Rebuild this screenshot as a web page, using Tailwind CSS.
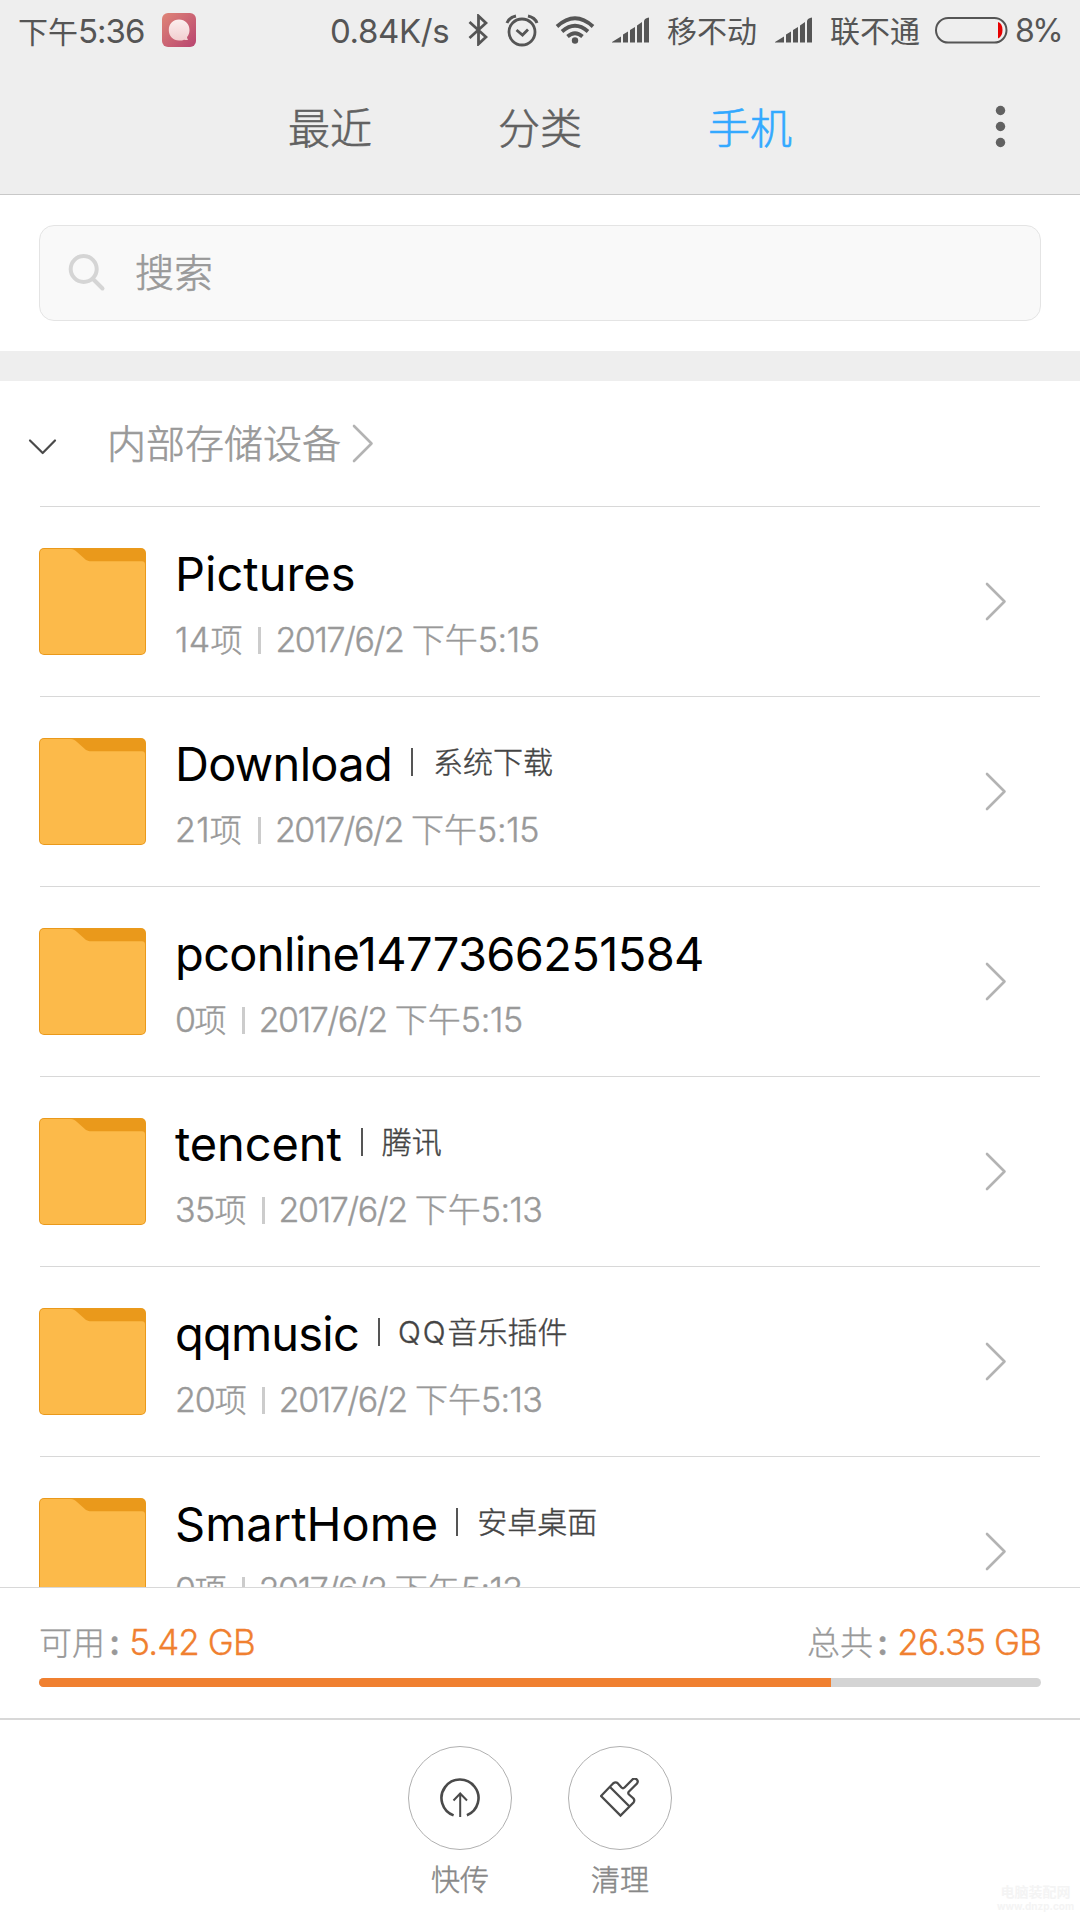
<!DOCTYPE html>
<html lang="zh-CN">
<head>
<meta charset="utf-8">
<title>文件管理</title>
<script src="https://cdn.jsdelivr.net/npm/@tailwindcss/browser@4"></script>
</head>
<body class="bg-white">
<svg class="hidden">
  <symbol id="folder" viewBox="0 0 107 107">
    <rect x="0" y="0" width="107" height="107" rx="5" fill="#ea991b"/>
    <path d="M1 5a4 4 0 0 1 4-4H32c2 0 4 1 6 3l9 8c2 1 3 1.200 5 1.200h51a3 3 0 0 1 3 3v85.800a4 4 0 0 1-4 4H5a4 4 0 0 1-4-4z" fill="#fcba4a"/>
  </symbol>
  <symbol id="next" viewBox="0 0 22 40">
    <path d="M2 2 19.500 19.500 2 37" fill="none" stroke="#b3b3b3" stroke-width="2.600" stroke-linecap="round" stroke-linejoin="round"/>
  </symbol>
  <symbol id="signal" viewBox="0 0 38 26">
    <path d="M0 25.500V25L9 19.500V25.500zM11 25.500V17.500L16 14.500V25.500zM18 25.500V13L23 10V25.500zM25 25.500V8.500L30 5V25.500zM32 25.500V4Q32.500 1 37 .500V25.500z" fill="#555"/>
  </symbol>
</svg>
<div class="relative flex h-[1920px] w-[1080px] flex-col overflow-hidden font-['Inter','Noto_Sans_CJK_SC',sans-serif]">

  <header class="h-[195px] shrink-0 border-b border-[#c8c8c8] bg-[#eee]">
    <div class="flex h-[60px] items-center pr-[19px] pl-[18px] text-[33px] leading-[60px] whitespace-nowrap text-[#555]">
      <div class="w-[144px] pt-[3px] tracking-[-1px]"><span class="text-[30px] tracking-normal">下午</span>5:36</div>
      <svg class="h-[34px] w-[34px]" viewBox="0 0 34 34">
        <defs>
          <linearGradient id="app" x1="0" y1="0" x2="1" y2="1"><stop offset="0" stop-color="#df8577"/><stop offset="1" stop-color="#b84470"/></linearGradient>
          <linearGradient id="bub" x1="0" y1="0" x2="0" y2="1"><stop offset="0" stop-color="#fbeeee"/><stop offset="1" stop-color="#f2cfd0"/></linearGradient>
        </defs>
        <rect width="34" height="34" rx="6" fill="url(#app)"/>
        <path d="M17 6.500c6 0 10.500 4.500 10.500 10.500 0 3-1 5.500-2.500 7 0 1.500 1 2.500 1 3-1.500.300-3-.200-4-.300-1.500.700-3 .800-5 .800-6 0-10.200-4.500-10.200-10.500S11 6.500 17 6.500z" fill="url(#bub)"/>
      </svg>
      <div class="ml-[134px] w-[138px] pt-px tracking-[-0.400px]">0.84K/s</div>
      <svg class="h-[32px] w-[20px]" viewBox="0 0 20 32"><path d="M1.500 8 18 23 10.500 30V2L18 9 1.500 24" fill="none" stroke="#555" stroke-width="2.800"/></svg>
      <svg class="ml-[17px] h-[34px] w-[34px]" viewBox="0 0 34 34" fill="none" stroke="#555"><circle cx="17" cy="19" r="13" stroke-width="2.800"/><path d="M11.500 17 17.500 22 23 16.500" stroke-width="2.800"/><path d="M2 10Q4 4.500 11 3M32 10Q30 4.500 23 3" stroke-width="3"/></svg>
      <svg class="ml-[16px] h-[28px] w-[40px]" viewBox="0 0 40 28"><g fill="none" stroke="#555" stroke-width="3.800"><path d="M2 10.500Q20-6 38 10.500"/><path d="M7 15.500Q20 4 33 15.500"/><path d="M12.500 20.500Q20 14 27.500 20.500"/></g><circle cx="20" cy="24.500" r="3.200" fill="#555"/></svg>
      <svg class="ml-[17px] h-[26px] w-[38px]"><use href="#signal"/></svg>
      <div class="ml-[17px] w-[90px] pt-px text-[30px]">移不动</div>
      <svg class="ml-[18px] h-[26px] w-[38px]"><use href="#signal"/></svg>
      <div class="ml-[17px] w-[90px] pt-px text-[30px]">联不通</div>
      <svg class="ml-[15px] h-[28px] w-[73px]" viewBox="0 0 73 28"><rect x="1" y="2" width="70.500" height="24.500" rx="12.200" fill="none" stroke="#555" stroke-width="2"/><path d="M63 6Q67.500 7.500 67.500 14T63 22.500z" fill="#e60000"/></svg>
      <div class="ml-auto pt-px text-[32px] tracking-[-2.600px]">8%</div>
    </div>
    <nav class="flex h-[134px] items-center pl-[225px] text-[42px] font-light text-[#616161] [-webkit-text-stroke:0.600px_currentColor]">
      <div class="w-[210px] pt-[3px] text-center">最近</div>
      <div class="w-[210px] pt-[3px] text-center">分类</div>
      <div class="w-[210px] pt-[3px] text-center text-[#33a9ff]">手机</div>
      <svg class="ml-[135px] h-[46px] w-[20px]" viewBox="0 0 20 46" fill="#616161" stroke="none"><circle cx="10.500" cy="6.500" r="4.700"/><circle cx="10.500" cy="22.500" r="4.700"/><circle cx="10.500" cy="38.500" r="4.700"/></svg>
    </nav>
  </header>

  <section class="shrink-0 px-[39px] py-[30px]">
    <div class="flex h-[96px] items-center rounded-[15px] border border-[#e4e4e4] bg-[#f9f9f9]">
      <svg class="ml-[28px] h-[40px] w-[40px]" viewBox="0 0 40 40" fill="none" stroke="#d5d5d5" stroke-width="4"><circle cx="15.700" cy="16" r="13"/><path d="M25 26 34.500 35.500" stroke-linecap="round"/></svg>
      <div class="ml-[27px] pt-px text-[39px] font-light text-[#999] [-webkit-text-stroke:0.600px_currentColor]">搜索</div>
    </div>
  </section>
  <div class="h-[30px] shrink-0 bg-[#eee]"></div>

  <section class="flex h-[125px] shrink-0 items-center pl-[27px]">
    <svg class="mt-[7px] h-[20px] w-[32px]" viewBox="0 0 32 20"><path d="M3 3.500 15.700 16 28 3.500" fill="none" stroke="#4a4a4a" stroke-width="2.200" stroke-linecap="round" stroke-linejoin="round"/></svg>
    <div class="ml-[48px] pt-[2px] text-[39px] font-light text-[#999] [-webkit-text-stroke:0.600px_currentColor]">内部存储设备</div>
    <svg class="ml-[11px] h-[40px] w-[22px]"><use href="#next"/></svg>
  </section>

  <ul class="mx-[40px] h-[1081px] shrink-0 border-t border-[#d8d8d8] [clip-path:inset(0_-10px_0_-10px)]">
    <li class="flex h-[190px] items-center border-b border-[#d8d8d8]">
      <svg class="-ml-px h-[107px] w-[107px] shrink-0"><use href="#folder"/></svg>
      <div class="ml-[29px] grow pt-[3px]">
        <div class="flex h-[60px] items-center text-[47px] leading-[60px] text-black"><span>Pictures</span></div>
        <div class="mt-[14px] flex h-[44px] items-center text-[34px] leading-[44px] font-light tracking-[-1.400px] text-[#999] [-webkit-text-stroke:0.400px_currentColor]"><span class="tracking-[0.300px]">14<span class="text-[32px] leading-none tracking-normal">项</span></span><i class="mr-[14px] ml-[16px] h-[27px] w-[3px] bg-[#ccc]"></i><span>2017/6/2 <span class="text-[33px] leading-none tracking-normal">下午</span><span class="tracking-[-0.300px]">5:15</span></span></div>
      </div>
      <svg class="mr-[33px] h-[40px] w-[22px]"><use href="#next"/></svg>
    </li>
    <li class="flex h-[190px] items-center border-b border-[#d8d8d8]">
      <svg class="-ml-px h-[107px] w-[107px] shrink-0"><use href="#folder"/></svg>
      <div class="ml-[29px] grow pt-[3px]">
        <div class="flex h-[60px] items-center text-[47px] leading-[60px] text-black"><span class="tracking-[-0.700px]">Download</span><i class="mr-[20px] ml-[19px] h-[28px] w-[2px] -translate-y-[2px] bg-[#555]"></i><span class="-translate-y-[2px] text-[30px] font-light text-[#444] [-webkit-text-stroke:0.400px_currentColor]">系统下载</span></div>
        <div class="mt-[14px] flex h-[44px] items-center text-[34px] leading-[44px] font-light tracking-[-1.400px] text-[#999] [-webkit-text-stroke:0.400px_currentColor]"><span class="tracking-[0.300px]">21<span class="text-[32px] leading-none tracking-normal">项</span></span><i class="mr-[14px] ml-[16px] h-[27px] w-[3px] bg-[#ccc]"></i><span>2017/6/2 <span class="text-[33px] leading-none tracking-normal">下午</span><span class="tracking-[-0.300px]">5:15</span></span></div>
      </div>
      <svg class="mr-[33px] h-[40px] w-[22px]"><use href="#next"/></svg>
    </li>
    <li class="flex h-[190px] items-center border-b border-[#d8d8d8]">
      <svg class="-ml-px h-[107px] w-[107px] shrink-0"><use href="#folder"/></svg>
      <div class="ml-[29px] grow pt-[3px]">
        <div class="flex h-[60px] items-center text-[47px] leading-[60px] text-black"><span class="tracking-[-0.650px]">pconline1477366251584</span></div>
        <div class="mt-[14px] flex h-[44px] items-center text-[34px] leading-[44px] font-light tracking-[-1.400px] text-[#999] [-webkit-text-stroke:0.400px_currentColor]"><span>0<span class="text-[32px] leading-none tracking-normal">项</span></span><i class="mr-[14px] ml-[15px] h-[27px] w-[3px] bg-[#ccc]"></i><span>2017/6/2 <span class="text-[33px] leading-none tracking-normal">下午</span><span class="tracking-[-0.300px]">5:15</span></span></div>
      </div>
      <svg class="mr-[33px] h-[40px] w-[22px]"><use href="#next"/></svg>
    </li>
    <li class="flex h-[190px] items-center border-b border-[#d8d8d8]">
      <svg class="-ml-px h-[107px] w-[107px] shrink-0"><use href="#folder"/></svg>
      <div class="ml-[29px] grow pt-[3px]">
        <div class="flex h-[60px] items-center text-[47px] leading-[60px] text-black"><span class="tracking-[-0.100px]">tencent</span><i class="mr-[19px] ml-[19px] h-[28px] w-[2px] -translate-y-[2px] bg-[#555]"></i><span class="-translate-y-[2px] text-[30px] font-light text-[#444] [-webkit-text-stroke:0.400px_currentColor]">腾讯</span></div>
        <div class="mt-[14px] flex h-[44px] items-center text-[34px] leading-[44px] font-light tracking-[-1.400px] text-[#999] [-webkit-text-stroke:0.400px_currentColor]"><span class="tracking-[-0.600px]">35<span class="text-[32px] leading-none tracking-normal">项</span></span><i class="mr-[14px] ml-[15px] h-[27px] w-[3px] bg-[#ccc]"></i><span>2017/6/2 <span class="text-[33px] leading-none tracking-normal">下午</span><span class="tracking-[-0.600px]">5:13</span></span></div>
      </div>
      <svg class="mr-[33px] h-[40px] w-[22px]"><use href="#next"/></svg>
    </li>
    <li class="flex h-[190px] items-center border-b border-[#d8d8d8]">
      <svg class="-ml-px h-[107px] w-[107px] shrink-0"><use href="#folder"/></svg>
      <div class="ml-[29px] grow pt-[3px]">
        <div class="flex h-[60px] items-center text-[47px] leading-[60px] text-black"><span class="tracking-[-0.800px]">qqmusic</span><i class="mr-[18px] ml-[19px] h-[28px] w-[2px] -translate-y-[2px] bg-[#555]"></i><span class="-translate-y-[2px] text-[30px] font-light text-[#444] [-webkit-text-stroke:0.400px_currentColor]"><span class="tracking-[2px]">QQ</span>音乐插件</span></div>
        <div class="mt-[14px] flex h-[44px] items-center text-[34px] leading-[44px] font-light tracking-[-1.400px] text-[#999] [-webkit-text-stroke:0.400px_currentColor]"><span class="tracking-[-1.100px]">20<span class="text-[32px] leading-none tracking-normal">项</span></span><i class="mr-[14px] ml-[15px] h-[27px] w-[3px] bg-[#ccc]"></i><span>2017/6/2 <span class="text-[33px] leading-none tracking-normal">下午</span><span class="tracking-[-0.600px]">5:13</span></span></div>
      </div>
      <svg class="mr-[33px] h-[40px] w-[22px]"><use href="#next"/></svg>
    </li>
    <li class="flex h-[190px] items-center border-b border-[#d8d8d8]">
      <svg class="-ml-px h-[107px] w-[107px] shrink-0"><use href="#folder"/></svg>
      <div class="ml-[29px] grow pt-[3px]">
        <div class="flex h-[60px] items-center text-[47px] leading-[60px] text-black"><span>SmartHome</span><i class="mr-[19px] ml-[18px] h-[28px] w-[2px] -translate-y-[2px] bg-[#555]"></i><span class="-translate-y-[2px] text-[30px] font-light text-[#444] [-webkit-text-stroke:0.400px_currentColor]">安卓桌面</span></div>
        <div class="mt-[14px] flex h-[44px] items-center text-[34px] leading-[44px] font-light tracking-[-1.400px] text-[#999] [-webkit-text-stroke:0.400px_currentColor]"><span>0<span class="text-[32px] leading-none tracking-normal">项</span></span><i class="mr-[14px] ml-[15px] h-[27px] w-[3px] bg-[#ccc]"></i><span>2017/6/2 <span class="text-[33px] leading-none tracking-normal">下午</span><span class="tracking-[-0.600px]">5:13</span></span></div>
      </div>
      <svg class="mr-[33px] h-[40px] w-[22px]"><use href="#next"/></svg>
    </li>
  </ul>

  <section class="h-[133px] shrink-0 border-t border-b-2 border-[#d8d8d8] px-[39px] pt-[32px]">
    <div class="flex h-[44px] justify-between text-[35px] leading-[44px] font-light tracking-[-0.900px] text-[#999] [-webkit-text-stroke:0.300px_currentColor]">
      <div><span class="text-[33px] leading-none tracking-normal">可用</span><span class="mr-[10px] ml-[4px] font-semibold">:</span><span class="text-[#f08030]">5.42 GB</span></div>
      <div><span class="text-[33px] leading-none tracking-normal">总共</span><span class="mr-[10px] ml-[4px] font-semibold">:</span><span class="text-[#f08030]">26.35 GB</span></div>
    </div>
    <div class="mt-[14px] h-[9px] overflow-hidden rounded-full bg-[#d4d4d4]"><div class="h-full bg-[#f08030]" style="width:79.04%"></div></div>
  </section>

  <footer class="flex grow justify-center gap-[56px] bg-white pt-[26px] text-[29px] font-light text-[#888] [-webkit-text-stroke:0.500px_currentColor]">
    <div class="flex w-[104px] flex-col items-center">
      <div class="h-[104px] w-[104px] rounded-full border border-[#b0b0b0] p-[31px]">
        <svg class="h-[40px] w-[40px]" viewBox="0 0 40 40" fill="none" stroke="#4a4a4a"><path d="M13.600 37.400A18.500 18.500 0 1 1 26.900 37.200" stroke-width="2.600"/><path d="M20.200 39V16M13.500 22.500 20.200 15.500 27 22.500" stroke-width="2"/></svg>
      </div>
      <div class="mt-[9px] leading-[44px]">快传</div>
    </div>
    <div class="flex w-[104px] flex-col items-center">
      <div class="h-[104px] w-[104px] rounded-full border border-[#b0b0b0] p-[31px]">
        <svg class="h-[40px] w-[40px]" viewBox="0 0 40 40" fill="none" stroke="#4a4a4a" stroke-width="2.300"><path d="M1 18 20.500 37.500 33.500 24.500Q35 22.500 33.500 20.500L29 16.500Q27.500 15 29 13.500L37 5.500Q38.500 3.500 37 1.700T33 1L24.500 9.500Q23 11 21.500 9.500L17.500 5Q15.500 3.500 13 5.500zM10.500 9.500 29.500 28.500"/></svg>
      </div>
      <div class="mt-[9px] leading-[44px]">清理</div>
    </div>
  </footer>

  <div class="absolute right-[10px] bottom-[7px] flex w-[69px] flex-col items-center whitespace-nowrap text-[#f4f4f4]">
    <div class="text-[14px] leading-[16px] font-bold">电脑装配网</div>
    <div class="text-[10px] leading-[13px] font-bold">www.dnzp.com</div>
  </div>
</div>
</body>
</html>
